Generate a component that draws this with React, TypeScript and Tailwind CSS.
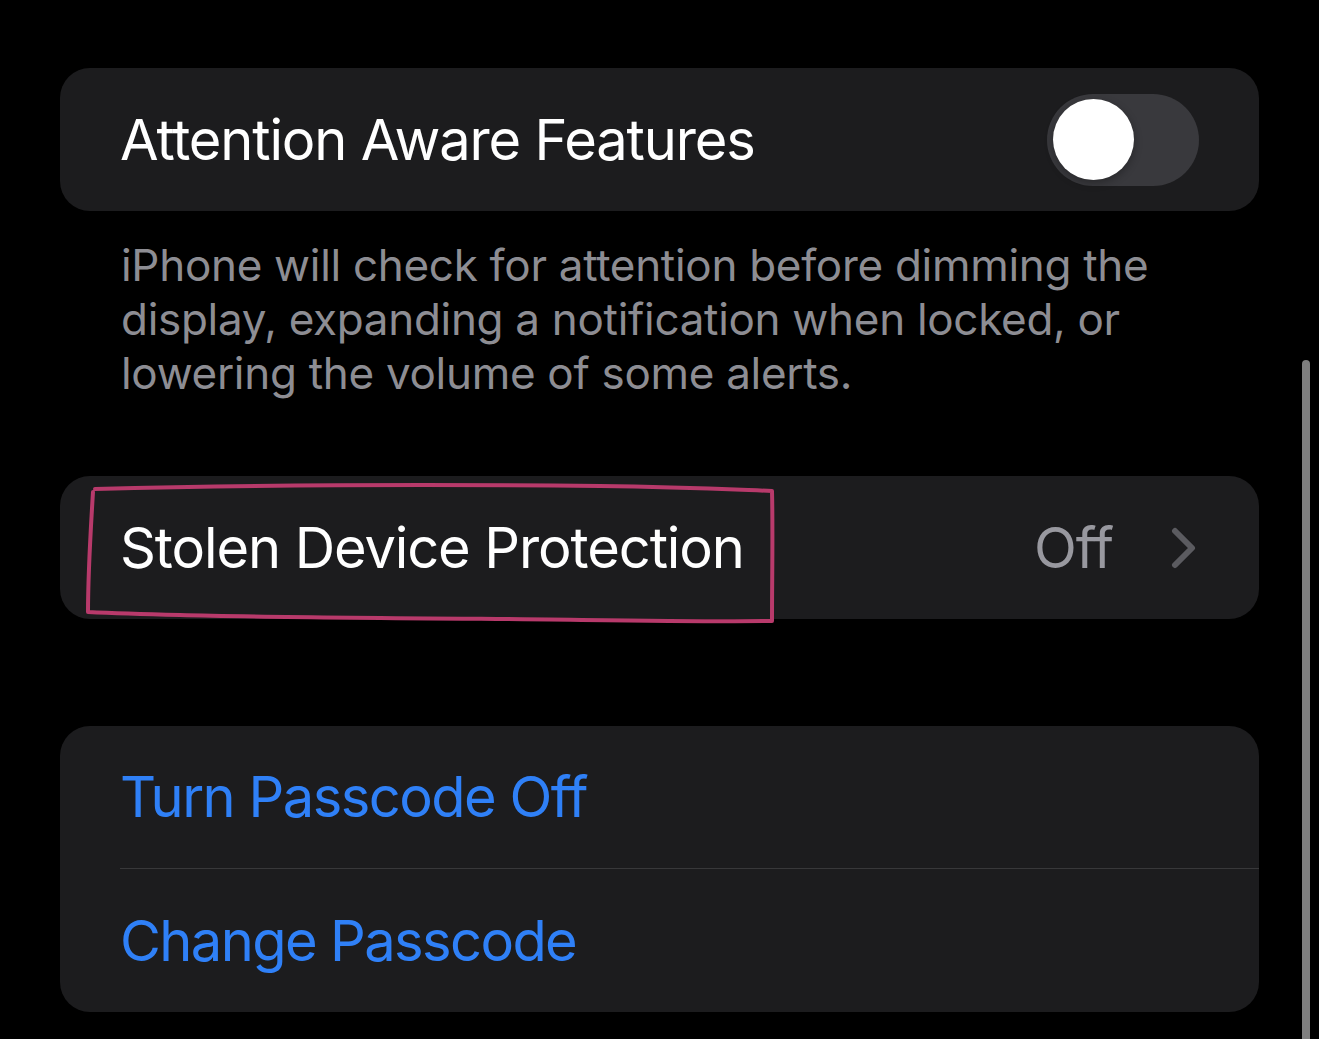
import React from "react";

const font = { fontFamily: "Inter, 'Noto Sans', 'Liberation Sans', sans-serif" };

export default function App() {
  return (
    <div className="relative w-[1319px] h-[1039px] bg-black overflow-hidden" style={font}>
      <div className="flex flex-col pl-[60px] pr-[60px] pt-[68px]">
        {/* Card 1 */}
        <div className="h-[143px] rounded-[30px] bg-[#1c1c1e] flex items-center pl-[60px] pr-[60px]">
          <span className="text-white text-[56px] tracking-[-1.15px] flex-1">Attention Aware Features</span>
          <div className="w-[152px] h-[92px] rounded-full bg-[#39393d] flex items-center pl-[6px]">
            <div className="w-[81px] h-[81px] rounded-full bg-white shadow-[0_3px_8px_rgba(0,0,0,0.3)]" />
          </div>
        </div>
        {/* Footer */}
        <div className="pt-[27px] pl-[61px] pr-[80px] text-[#8d8d93] text-[44px] tracking-[-0.3px] leading-[54px]">
          iPhone will check for attention before dimming the display, expanding a notification when locked, or lowering the volume of some alerts.
        </div>
        {/* Card 2 */}
        <div className="mt-[76px] h-[143px] rounded-[30px] bg-[#1c1c1e] flex items-center pl-[60px] pr-[62px]">
          <span className="text-white text-[56px] tracking-[-1.1px] flex-1">Stolen Device Protection</span>
          <span className="text-[#98989f] text-[56px] tracking-[-1px] mr-[58px]">Off</span>
          <svg width="26" height="42" viewBox="0 0 26 42">
            <path d="M4 4 L21 21 L4 38" fill="none" stroke="#5b5b60" strokeWidth="6" strokeLinecap="round" strokeLinejoin="round" />
          </svg>
        </div>
        {/* Card 3 */}
        <div className="mt-[107px] rounded-[30px] bg-[#1c1c1e] flex flex-col">
          <div className="h-[142px] flex items-center pl-[60px]">
            <span className="text-[#2f80f7] text-[56px] tracking-[-1.5px]">Turn Passcode Off</span>
          </div>
          <div className="ml-[60px] h-[1px] bg-[#38383a]" />
          <div className="h-[143px] flex items-center pl-[60px]">
            <span className="text-[#2f80f7] text-[56px] tracking-[-1.6px]">Change Passcode</span>
          </div>
        </div>
      </div>

      {/* Hand-drawn annotation */}
      <svg className="absolute left-0 top-0 pointer-events-none" width="1319" height="1039" viewBox="0 0 1319 1039">
        <path
          d="M95 489 C 250 485, 420 484, 600 486 C 680 487, 720 489, 772 491 C 773 530, 772 580, 772 621 C 700 622, 600 620, 500 619 C 380 618, 250 617, 180 615 C 140 614, 110 613, 88 612 C 88 580, 90 540, 93 492"
          fill="none"
          stroke="#b83a6b"
          strokeWidth="4"
          strokeLinecap="round"
          strokeLinejoin="round"
        />
      </svg>

      {/* Scrollbar */}
      <div className="absolute left-[1302px] top-[360px] w-[8px] h-[700px] rounded-t-full bg-[#7f7f7f]" />
    </div>
  );
}
